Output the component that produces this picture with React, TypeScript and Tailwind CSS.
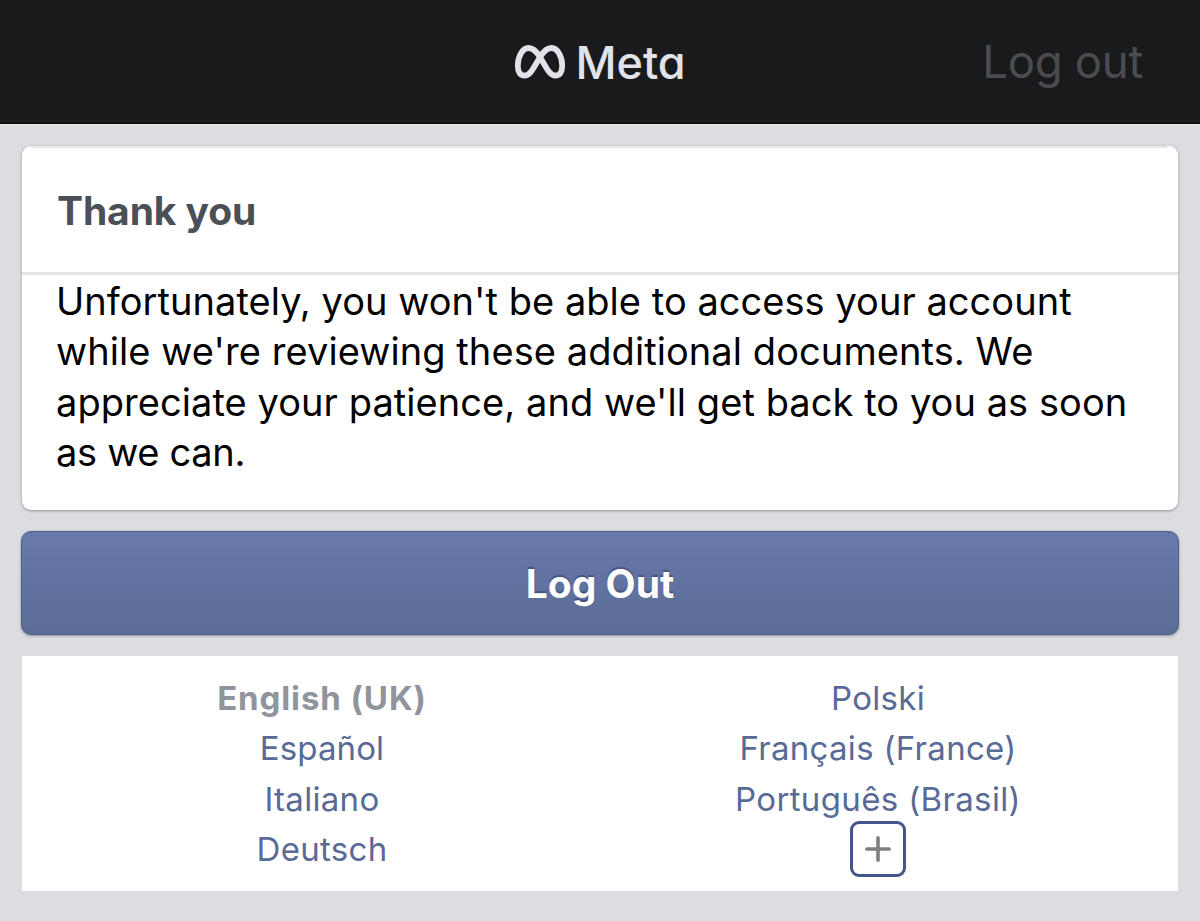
interface Language {
  label: string;
  className: string;
}

const message = [
  { text: "Unfortunately, you won't be able to access your account", className: 'tracking-[0.04px]' },
  { text: "while we're reviewing these additional documents. We", className: 'tracking-[0.08px]' },
  { text: "appreciate your patience, and we'll get back to you as soon", className: 'tracking-[0.06px]' },
  { text: 'as we can.', className: 'tracking-[-0.3px]' },
];

const leftLanguages: Language[] = [
  { label: 'English (UK)', className: 'font-bold tracking-[0.9px] text-[#90949c]' },
  { label: 'Español', className: 'tracking-[0.1px] text-[#596a96]' },
  { label: 'Italiano', className: 'tracking-[0.3px] text-[#596a96]' },
  { label: 'Deutsch', className: 'tracking-[0.3px] text-[#596a96]' },
];

const rightLanguages: Language[] = [
  { label: 'Polski', className: 'tracking-[0.3px] text-[#596a96]' },
  { label: 'Français (France)', className: 'tracking-[0.3px] text-[#596a96]' },
  { label: 'Português (Brasil)', className: 'tracking-[0.35px] text-[#596a96]' },
];

function LanguageLink({ label, className }: Language) {
  return (
    <a href="#" className={`block h-[50.4px] whitespace-nowrap ${className}`}>
      {label}
    </a>
  );
}

function MetaSymbol() {
  return (
    <svg width="52" height="36" viewBox="0 0 52 36" fill="none" stroke="currentColor" strokeWidth="5.8">
      <path d="M26 13C22.2 7 18.8 4 14.6 4C8.2 4 3.8 13 3.8 21.8C3.8 28 6.4 31.6 10.6 31.6C16 31.6 18.8 25.5 26 13C29.8 7 33.2 4 37.4 4C43.8 4 48.2 13 48.2 21.8C48.2 28 45.6 31.6 41.4 31.6C36 31.6 33.2 25.5 26 13Z" />
    </svg>
  );
}

function Header() {
  return (
    <header className="grid h-[124px] grid-cols-3 items-center border-b border-[#050608] bg-[#191a1c] px-[57px] shadow-[0_1px_0_#eeeef1]">
      <div />
      <div className="flex items-center justify-center gap-[9px] pt-px text-[#e2e3ea]">
        <MetaSymbol />
        <span className="text-[45px] leading-none font-medium [font-feature-settings:'cv11']">
          Meta
        </span>
      </div>
      <a href="#" className="justify-self-end pt-px text-[45.5px] leading-none tracking-[-0.3px] text-[#4b4c50]">
        Log out
      </a>
    </header>
  );
}

export default function App() {
  return (
    <div className="h-[921px] w-[1200px] overflow-hidden bg-[#dcdde1] font-['Inter',sans-serif]">
      <Header />

      <main className="px-[22px] pt-[22px]">
        <section className="h-[364px] rounded-[9px] bg-white shadow-[0_1px_3px_rgba(0,0,0,0.35)]">
          <div className="ml-[9px] mr-[11px] h-[2px] bg-[#e6e6e8]" />
          <h1 className="flex h-[127px] items-center border-b-3 border-[#e3e4e6] px-[35px] pt-[2px] text-[39px] font-bold tracking-[-0.1px] text-[#4b4f56]">
            Thank you
          </h1>
          <p className="px-[34px] pt-px text-[38px] leading-[50.4px] text-black">
            {message.map((line) => (
              <span key={line.text} className={`block whitespace-nowrap ${line.className}`}>
                {line.text}
              </span>
            ))}
          </p>
        </section>

        <button className="-mx-px mt-[21px] block h-[104px] w-[1158px] rounded-[10px] border border-[#4c5f86] bg-linear-to-b from-[#6879ab] to-[#5b6c96] pt-[2px] text-[39px] font-bold text-white shadow-[0_1px_3px_rgba(0,0,0,0.35)] text-shadow-[0_-2px_1px_rgba(40,50,100,0.5)]">
          Log Out
        </button>

        <nav className="mt-[21px] grid h-[235px] grid-cols-2 bg-white px-[22px] pt-[17px] text-center text-[33px] leading-[50.4px]">
          <div>
            {leftLanguages.map((lang) => (
              <LanguageLink key={lang.label} {...lang} />
            ))}
          </div>
          <div>
            {rightLanguages.map((lang) => (
              <LanguageLink key={lang.label} {...lang} />
            ))}
            <button aria-label="More languages" className="mx-auto -mt-[3px] flex size-14 items-center justify-center rounded-[9px] border-3 border-[#42568c]">
              <svg width="26" height="26" viewBox="0 0 26 26" stroke="#7f7f7f" strokeWidth="3.6" strokeLinecap="round">
                <path d="M13 1.8v22.4M1.8 13h22.4" />
              </svg>
            </button>
          </div>
        </nav>
      </main>
    </div>
  );
}
